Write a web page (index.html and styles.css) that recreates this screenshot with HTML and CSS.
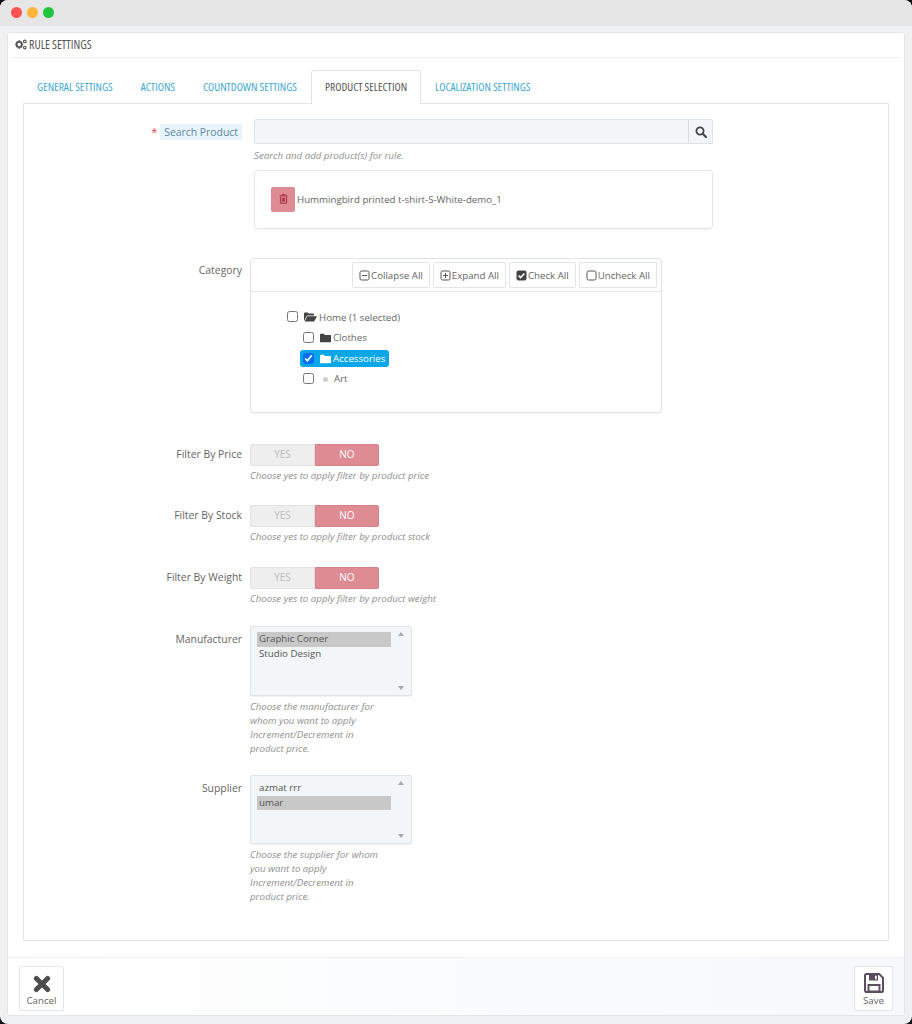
FILE: index.html
```html
<!DOCTYPE html>
<html lang="en">
<head>
<meta charset="utf-8">
<title>Rule Settings</title>
<link rel="stylesheet" href="styles.css">
</head>
<body>
<div class="window">
  <div class="titlebar">
    <span class="dot dot-red"></span><span class="dot dot-yellow"></span><span class="dot dot-green"></span>
  </div>
  <div class="panel">
    <div class="panel-head">
      <svg class="gears" viewBox="0 0 12 11" width="12" height="11"><circle cx="4.2" cy="5.5" r="2.6" fill="none" stroke="#555" stroke-width="1.8"/><path d="M4.2 1v1.2M4.2 8.8V10M.2 5.5h1.2M7 5.5h1.2M1.4 2.7l.8.8M6.2 7.5l.8.8M1.4 8.3l.8-.8M6.2 3.5l.8-.8" stroke="#555" stroke-width="1.3"/><circle cx="9.8" cy="2.4" r="1.3" fill="none" stroke="#555" stroke-width="1.1"/><circle cx="9.8" cy="8.6" r="1.3" fill="none" stroke="#555" stroke-width="1.1"/></svg>
      <span>RULE SETTINGS</span>
    </div>
    <div class="panel-body">
      <div class="tabs">
        <a class="tab">GENERAL SETTINGS</a>
        <a class="tab">ACTIONS</a>
        <a class="tab">COUNTDOWN SETTINGS</a>
        <a class="tab tab-active">PRODUCT SELECTION</a>
        <a class="tab">LOCALIZATION SETTINGS</a>
      </div>
      <div class="tab-panel">
        <div class="row row-search">
          <div class="label label-search"><span class="req">*</span><span class="tip">Search Product</span></div>
          <div class="field field-indent">
            <div class="search">
              <div class="search-input"></div>
              <div class="search-btn"><svg viewBox="0 0 12 12" width="12" height="12"><circle cx="5" cy="5" r="3.6" fill="none" stroke="#444" stroke-width="1.8"/><path d="M7.8 7.8l3.2 3.2" stroke="#444" stroke-width="2.1" stroke-linecap="round"/></svg></div>
            </div>
            <p class="hint">Search and add product(s) for rule.</p>
            <div class="product-box">
              <span class="trash"><svg viewBox="0 0 10 11" width="9" height="10"><path d="M3.4 1.6V.6h3.2v1M.6 2h8.8M1.6 2.6v7.6h6.8V2.6M3.6 4v4.6M5 4v4.6M6.4 4v4.6" fill="none" stroke="#a8333f" stroke-width="1.1"/></svg></span>
              <span>Hummingbird printed t-shirt-S-White-demo_1</span>
            </div>
          </div>
        </div>

        <div class="row row-category">
          <div class="label label-cat">Category</div>
          <div class="field">
            <div class="tree">
              <div class="tree-bar">
                <span class="tbtn"><svg viewBox="0 0 11 11" width="11" height="11"><rect x="1" y="1" width="9" height="9" rx="1.6" fill="none" stroke="#555"/><path d="M3 5.5h5" stroke="#555"/></svg>Collapse All</span>
                <span class="tbtn"><svg viewBox="0 0 11 11" width="11" height="11"><rect x="1" y="1" width="9" height="9" rx="1.6" fill="none" stroke="#555"/><path d="M3 5.5h5M5.5 3v5" stroke="#555"/></svg>Expand All</span>
                <span class="tbtn"><svg viewBox="0 0 11 11" width="11" height="11"><rect x=".5" y=".5" width="10" height="10" rx="2" fill="#444"/><path d="M2.6 5.6l2 2 3.8-4" fill="none" stroke="#fff" stroke-width="1.5"/></svg>Check All</span>
                <span class="tbtn"><svg viewBox="0 0 11 11" width="11" height="11"><rect x="1" y="1" width="9" height="9" rx="1.6" fill="none" stroke="#555"/></svg>Uncheck All</span>
              </div>
              <ul class="tree-list">
                <li class="node node-root"><input type="checkbox" class="cb"><svg class="folder" viewBox="0 0 13 10" width="13" height="10"><path d="M0 9V1.2C0 .7.4.4.8.4h3l1 1.2h4.4c.5 0 .8.3.8.8V3.4H3L0 9zM3.4 4.2H13L10.2 9.6H.6z" fill="#444"/></svg><span>Home (1 selected)</span></li>
                <li class="node"><input type="checkbox" class="cb"><svg class="folder" viewBox="0 0 12 10" width="11" height="10"><path d="M0 1.2C0 .7.4.4.8.4h3.4l1 1.2h6c.5 0 .8.3.8.8v6.4c0 .5-.3.8-.8.8H.8C.4 9.6 0 9.3 0 8.8z" fill="#444"/></svg><span>Clothes</span></li>
                <li class="node node-sel"><input type="checkbox" class="cb" checked><svg class="folder" viewBox="0 0 12 10" width="11" height="10"><path d="M0 1.2C0 .7.4.4.8.4h3.4l1 1.2h6c.5 0 .8.3.8.8v6.4c0 .5-.3.8-.8.8H.8C.4 9.6 0 9.3 0 8.8z" fill="#fff"/></svg><span>Accessories</span></li>
                <li class="node"><input type="checkbox" class="cb"><span class="leaf"></span><span>Art</span></li>
              </ul>
            </div>
          </div>
        </div>

        <div class="row row-price">
          <div class="label label-switch">Filter By Price</div>
          <div class="field">
            <div class="switch"><span class="sw-yes">YES</span><span class="sw-no">NO</span></div>
            <p class="hint hint-s">Choose yes to apply filter by product price</p>
          </div>
        </div>
        <div class="row row-stock">
          <div class="label label-switch">Filter By Stock</div>
          <div class="field">
            <div class="switch"><span class="sw-yes">YES</span><span class="sw-no">NO</span></div>
            <p class="hint hint-s">Choose yes to apply filter by product stock</p>
          </div>
        </div>
        <div class="row row-weight">
          <div class="label label-switch">Filter By Weight</div>
          <div class="field">
            <div class="switch"><span class="sw-yes">YES</span><span class="sw-no">NO</span></div>
            <p class="hint hint-s">Choose yes to apply filter by product weight</p>
          </div>
        </div>

        <div class="row row-list">
          <div class="label label-list">Manufacturer</div>
          <div class="field">
            <div class="listbox">
              <div class="list-items"><div class="opt opt-sel">Graphic Corner</div><div class="opt">Studio Design</div></div>
              <div class="scroll"><span class="arrow-up"></span><span class="arrow-down"></span></div>
            </div>
            <p class="hint hint-s hint-wrap hint-top">Choose the manufacturer for whom you want to apply Increment/Decrement in product price.</p>
          </div>
        </div>
        <div class="row row-list row-supplier">
          <div class="label label-list">Supplier</div>
          <div class="field">
            <div class="listbox listbox-s">
              <div class="list-items"><div class="opt">azmat rrr</div><div class="opt opt-sel">umar</div></div>
              <div class="scroll"><span class="arrow-up"></span><span class="arrow-down"></span></div>
            </div>
            <p class="hint hint-s hint-wrap hint-top">Choose the supplier for whom you want to apply Increment/Decrement in product price.</p>
          </div>
        </div>
      </div>
    </div>
    <div class="panel-foot">
      <div class="fbtn fbtn-cancel"><svg viewBox="0 0 18 18" width="18" height="18"><path d="M3.4 3.4l11.2 11.2M14.6 3.4L3.4 14.6" stroke="#4d4d4d" stroke-width="5" stroke-linecap="round"/></svg><span>Cancel</span></div>
      <div class="fbtn fbtn-save"><svg viewBox="0 0 20 20" width="20" height="20"><path d="M2.8 1h12.4L19 4.8v12.4c0 1-.8 1.8-1.8 1.8H2.8c-1 0-1.8-.8-1.8-1.8V2.8C1 1.800 1.800 1 2.800 1z" fill="none" stroke="#5b4f5f" stroke-width="2"/><path d="M5 1.500h9v6H5z" fill="#5b4f5f"/><path d="M11 2.800h1.800v3.400H11z" fill="#fff"/><path d="M4.500 12h11v6.500h-11z" fill="none" stroke="#5b4f5f" stroke-width="2"/></svg><span>Save</span></div>
    </div>
  </div>
</div>
</body>
</html>
```
FILE: styles.css
```css
* { box-sizing: border-box; }
html { background: #111; }
body {
  margin: 0;
  font-family: "Open Sans", sans-serif;
  font-size: 9.7px;
  color: #666;
}
.window {
  width: 912px;
  height: 1024px;
  background: #eff1f3;
  border-radius: 8px;
  overflow: hidden;
  padding-bottom: 8px;
}
.titlebar {
  height: 26px;
  background: #e6e6e6;
  display: flex;
  align-items: center;
  gap: 5px;
  padding: 0 0 1px 11px;
}
.dot { width: 11px; height: 11px; border-radius: 50%; }
.dot-red { background: #ff5252; }
.dot-yellow { background: #fdb53a; }
.dot-green { background: #22c341; }

.panel {
  margin: 6px 7px 0;
  width: 898px;
  height: 984px;
  background: #fff;
  border: 1px solid #e3e6e9;
  border-radius: 3px;
  display: flex;
  flex-direction: column;
}
.panel-head {
  height: 25px;
  margin: 0 3px;
  border-bottom: 1px solid #eef0f2;
  display: flex;
  align-items: center;
  gap: 2px;
  padding: 0 0 2px 4px;
  font-family: "Open Sans", sans-serif;
  font-stretch: 75%;
  font-size: 12px;
  color: #555;
}
.panel-body { flex: 1; padding: 12px 15px 0; }
.tabs { display: flex; height: 33px; position: relative; z-index: 1; }
.tab {
  height: 33px;
  padding: 0 13px;
  border: 1px solid transparent;
  border-bottom: 0;
  font-family: "Open Sans", sans-serif;
  font-stretch: 75%;
  font-size: 11.4px;
  line-height: 31px;
  color: #3fa9d3;
  white-space: nowrap;
}
.tab-active {
  background: #fff;
  color: #555;
  border-color: #dfe3e6;
  border-radius: 3px 3px 0 0;
  height: 34px;
}
.tab-panel {
  width: 866px;
  height: 838px;
  border: 1px solid #e3e6e9;
  padding-top: 15px;
}
.row { display: grid; grid-template-columns: 218px 1fr; column-gap: 8px; }
.label { text-align: right; font-size: 10.4px; color: #666; }
.field { min-width: 0; }
.field-indent { padding-left: 4px; width: 463px; }
.label-search { padding-top: 5px; }
.label-cat { padding-top: 5px; }
.label-switch { padding-top: 3px; }
.label-list { padding-top: 6px; }
.req { color: #e8424e; margin-right: 3px; font-size: 11px; }
.tip {
  display: inline-block;
  background: #e9f3fa;
  color: #5a8aa5;
  border-radius: 2px;
  padding: 0 4px;
  height: 16px;
  line-height: 16px;
}
.search { display: flex; height: 25px; }
.search-input {
  flex: 1;
  background: #f3f6f8;
  border: 1px solid #dce4ea;
  border-radius: 2px 0 0 2px;
}
.search-btn {
  width: 25px;
  background: #f3f6f8;
  border: 1px solid #dce4ea;
  border-left: 1px solid #d5dde3;
  margin-left: -1px;
  border-radius: 0 2px 2px 0;
  display: flex;
  align-items: center;
  justify-content: center;
}
.hint {
  margin: 4px 0 0;
  font-size: 9.7px;
  line-height: 15px;
  font-style: italic;
  color: #8f8f8f;
}
.product-box {
  margin-top: 7px;
  height: 59px;
  border: 1px solid #e3e6e9;
  border-radius: 4px;
  display: flex;
  align-items: center;
  gap: 2px;
  padding: 0 0 1px 16px;
  box-shadow: 0 1px 1px rgba(0,0,0,.04);
}
.trash {
  width: 24px;
  height: 25px;
  background: #df8b94;
  border-radius: 2px;
  display: flex;
  align-items: center;
  justify-content: center;
}
.row-category { margin-top: 29px; }
.tree {
  width: 412px;
  height: 155px;
  border: 1px solid #e0e3e6;
  border-radius: 4px;
  box-shadow: 0 1px 1px rgba(0,0,0,.05);
}
.tree-bar {
  height: 33px;
  border-bottom: 1px solid #e6e8ea;
  display: flex;
  justify-content: flex-end;
  gap: 3px;
  padding: 3px 4px 0 0;
}
.tbtn {
  height: 26px;
  border: 1px solid #e3e6e9;
  border-radius: 2px;
  padding: 0 6px;
  display: flex;
  align-items: center;
  gap: 1px;
  color: #666;
  white-space: nowrap;
}
.tree-list { list-style: none; margin: 0; padding: 15px 0 0 36px; }
.node {
  height: 20.5px;
  display: flex;
  align-items: center;
  margin-left: 5px;
  padding-left: 11px;
  width: max-content;
}
.node-root { margin-left: -5px; padding-left: 5px; }
.cb { width: 11px; height: 11px; margin: 0 6px 1px 0; accent-color: #0a6cf5; }
.folder { margin-right: 2px; }
.node-sel {
  background: #0aa7e8;
  color: #fff;
  border-radius: 3px;
  height: 17px;
  margin: 2px 0 1.5px 12.5px;
  padding: 0 4px 0 3.5px;
}
.leaf {
  width: 5px;
  height: 5px;
  background: #cfcfcf;
  border-radius: 50%;
  margin: 1px 6px 0 3px;
}
.row-price { margin-top: 31px; }
.row-stock { margin-top: 22px; }
.row-weight { margin-top: 23px; }
.switch {
  width: 129px;
  height: 22px;
  display: flex;
  font-size: 10px;
  line-height: 18px;
  text-align: center;
}
.sw-yes {
  width: 65px;
  background: #eee;
  border: 1px solid #e2e2e2;
  border-radius: 2px 0 0 2px;
  color: #bdbdbd;
}
.sw-no {
  width: 64px;
  background: #df8b94;
  border: 1px solid #d57f88;
  border-radius: 0 2px 2px 0;
  color: #fff;
}
.hint-s { margin-top: 3px; line-height: 14px; }
.hint-wrap { width: 135px; }
.hint-top { margin-top: 4px; }
.row-list { margin-top: 20px; }
.row-supplier { margin-top: 19px; }
.listbox {
  width: 162px;
  height: 70px;
  background: #f3f6f8;
  border: 1px solid #dce4ea;
  border-radius: 2px;
  box-shadow: 0 1px 1px rgba(0,0,0,.06);
  display: flex;
  color: #555;
}
.listbox-s { height: 69px; }
.list-items { width: 140px; padding: 5px 0 0 6px; }
.opt { height: 14.5px; line-height: 13.5px; padding-left: 2px; white-space: nowrap; }
.opt-sel { background: #c8c8c8; }
.scroll {
  flex: 1;
  display: flex;
  flex-direction: column;
  justify-content: space-between;
  align-items: center;
  padding: 5px 0;
}
.arrow-up { border: 3px solid transparent; border-top: 0; border-bottom: 4px solid #a8a8a8; }
.arrow-down { border: 3px solid transparent; border-bottom: 0; border-top: 4px solid #a8a8a8; }

.panel-foot {
  height: 58px;
  border-top: 1px solid #eef0f2;
  background: linear-gradient(90deg, #fff 0%, #f6f8fb 100%);
  display: flex;
  justify-content: space-between;
  padding: 8px 11px 0;
}
.fbtn {
  height: 45px;
  background: #fff;
  border: 1px solid #e3e6e9;
  border-radius: 2px;
  display: flex;
  flex-direction: column;
  align-items: center;
  justify-content: flex-start;
  line-height: 13px;
  color: #666;
}
.fbtn span { margin-top: 1px; }
.fbtn-cancel { width: 45px; padding-top: 8px; }
.fbtn-save { width: 39px; padding-top: 6px; }
```
